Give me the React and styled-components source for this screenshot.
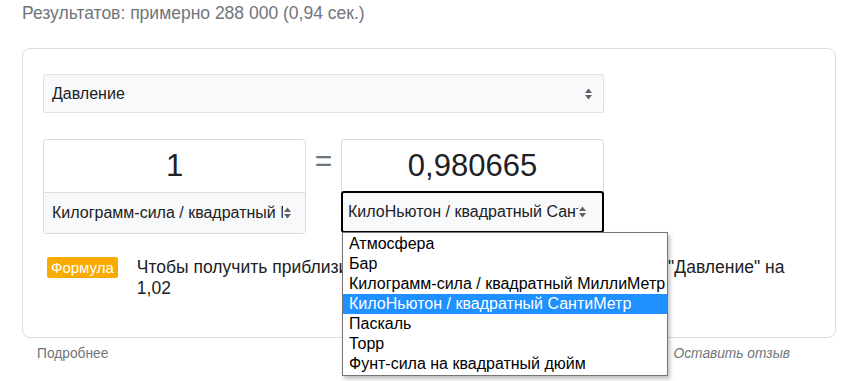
import React from 'react';
import styled, { createGlobalStyle } from 'styled-components';

const GlobalStyle = createGlobalStyle`
  body {
    margin: 0;
    background: #fff;
    font-family: "Liberation Sans", Arial, sans-serif;
  }
`;

const Page = styled.div`
  width: 847px;
  height: 381px;
  overflow: hidden;
  padding: 3px 0 0 22px;
  box-sizing: border-box;
`;

const Stats = styled.div`
  font-size: 17.5px;
  line-height: 20px;
  color: #70757a;
  height: 45px;
`;

const Card = styled.div`
  width: 814px;
  height: 290px;
  box-sizing: border-box;
  border: 1px solid #dadce0;
  border-radius: 8px;
  padding: 25px 20px 0 20px;
`;

const SelectBox = styled.div`
  display: flex;
  align-items: center;
  box-sizing: border-box;
  background: #f8f9fa;
  color: #202124;
  font-size: 16px;
  white-space: nowrap;
`;

const SelectLabel = styled.span`
  flex: 1;
  min-width: 0;
  overflow: hidden;
`;

const CategorySelect = styled(SelectBox)`
  width: 561px;
  height: 39px;
  border: 1px solid #dfe1e5;
  border-radius: 2px;
  padding: 0 10px 0 8px;
`;

const Arrows = styled.svg`
  flex-shrink: 0;
`;

const SelectArrows = () => (
  <Arrows width="9" height="14" viewBox="0 0 9 14">
    <path d="M4.5 1.5 L8 6 L1 6 Z" fill="#5f6368" />
    <path d="M4.5 12.5 L8 8 L1 8 Z" fill="#5f6368" />
  </Arrows>
);

const ConverterRow = styled.div`
  display: flex;
  align-items: flex-start;
  margin-top: 26px;
`;

const UnitBox = styled.div`
  position: relative;
  width: 263px;
  box-sizing: border-box;
  border: 1px solid #dadce0;
  border-radius: 3px;
`;

const ValueField = styled.div`
  height: 52px;
  display: flex;
  align-items: center;
  justify-content: center;
  font-size: 31px;
  color: #202124;
  background: #fff;
  border-radius: 3px 3px 0 0;
`;

const UnitSelect = styled(SelectBox)`
  height: 41px;
  border-top: 1px solid #dadce0;
  padding: 0 13px 0 8px;
  ${p => p.$focused && `
    margin: -1px;
    border: 2px solid #000;
    border-radius: 3px;
    height: 42px;
    padding: 0 15px 0 5px;
  `}
`;

const Equals = styled.div`
  width: 35px;
  text-align: center;
  font-size: 30px;
  line-height: 40px;
  color: #70757a;
  margin-top: 2px;
`;

const Dropdown = styled.ul`
  position: absolute;
  left: 0px;
  top: 92px;
  margin: 0;
  padding: 1px 0;
  list-style: none;
  width: 326px;
  box-sizing: border-box;
  background: #fff;
  border: 1px solid #767676;
  box-shadow: 2px 3px 4px rgba(0, 0, 0, 0.25);
  z-index: 5;
`;

const Option = styled.li`
  font-size: 16px;
  line-height: 20px;
  padding: 0 4px 0 6px;
  white-space: nowrap;
  color: ${p => (p.$active ? '#fff' : '#000')};
  background: ${p => (p.$active ? '#1e90ff' : 'transparent')};
`;

const FormulaRow = styled.div`
  display: flex;
  align-items: flex-start;
  margin-top: 23px;
  padding-left: 4px;
`;

const Badge = styled.span`
  flex-shrink: 0;
  background: #f9ab00;
  color: #fff;
  font-size: 15px;
  line-height: 21px;
  padding: 0 4px;
  border-radius: 2px;
  margin-right: 19px;
`;

const FormulaText = styled.div`
  font-size: 17.5px;
  line-height: 21px;
  color: #202124;
  width: 670px;
`;

const Footer = styled.div`
  display: flex;
  justify-content: space-between;
  width: 753px;
  padding-left: 15px;
  margin-top: 8px;
  font-size: 13.75px;
  color: #70757a;
`;

const Feedback = styled.span`
  font-style: italic;
`;

const units = [
  'Атмосфера',
  'Бар',
  'Килограмм-сила / квадратный МиллиМетр',
  'КилоНьютон / квадратный СантиМетр',
  'Паскаль',
  'Торр',
  'Фунт-сила на квадратный дюйм',
];

export default function App() {
  return (
    <Page>
      <GlobalStyle />
      <Stats>Результатов: примерно 288 000 (0,94 сек.)</Stats>
      <Card>
        <CategorySelect>
          <SelectLabel>Давление</SelectLabel>
          <SelectArrows />
        </CategorySelect>
        <ConverterRow>
          <UnitBox>
            <ValueField>1</ValueField>
            <UnitSelect>
              <SelectLabel>Килограмм-сила / квадратный МиллиМетр</SelectLabel>
              <SelectArrows />
            </UnitSelect>
          </UnitBox>
          <Equals>=</Equals>
          <UnitBox>
            <ValueField>0,980665</ValueField>
            <UnitSelect $focused>
              <SelectLabel>КилоНьютон / квадратный СантиМетр</SelectLabel>
              <SelectArrows />
            </UnitSelect>
            <Dropdown>
              {units.map(u => (
                <Option key={u} $active={u.startsWith('КилоНьютон')}>{u}</Option>
              ))}
            </Dropdown>
          </UnitBox>
        </ConverterRow>
        <FormulaRow>
          <Badge>Формула</Badge>
          <FormulaText>
            Чтобы получить приблизительный результат, поделите значение "Давление" на 1,02
          </FormulaText>
        </FormulaRow>
      </Card>
      <Footer>
        <span>Подробнее</span>
        <Feedback>Оставить отзыв</Feedback>
      </Footer>
    </Page>
  );
}
